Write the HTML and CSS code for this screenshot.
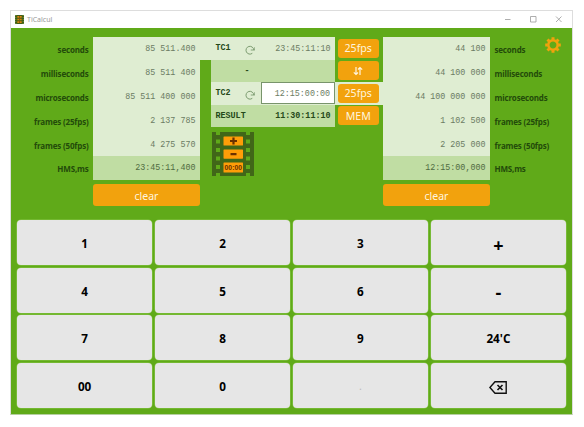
FILE: index.html
```html
<!DOCTYPE html>
<html lang="en">
<head>
<meta charset="utf-8">
<title>TiCalcul</title>
<link rel="stylesheet" href="styles.css">
</head>
<body>
<div class="window">
  <header class="titlebar">
    <svg class="app-icon" viewBox="0 0 9 9"><rect width="9" height="9" fill="#405f18"/><path d="M.8 0v9M8.2 0v9" stroke="#78963c" stroke-dasharray="1 1"/><path d="M2.3 1.8h4.4M2.3 4.5h4.4M2.3 7.2h4.4" stroke="#d8830b" stroke-width="1.7"/><path d="M4.5 1v7" stroke="#83500d" stroke-width=".8"/></svg>
    <span class="title">TiCalcul</span>
    <svg class="controls" viewBox="0 0 60 10" fill="none" stroke="#999" stroke-width=".8"><path d="M0 4.500h5.500M25.500 1.500h5.500v5.500h-5.500zM51 1.500l5.500 5.500M56.500 1.500l-5.500 5.500"/></svg>
  </header>
  <main class="app">
    <section class="converter">
      <div class="labels left">
        <span>seconds</span><span>milliseconds</span><span>microseconds</span><span>frames (25fps)</span><span>frames (50fps)</span><span>HMS,ms</span>
      </div>
      <div class="column">
        <div class="values">
          <span>85 511.400</span><span>85 511 400</span><span>85 511 400 000</span><span>2 137 785</span><span>4 275 570</span><span class="hms">23:45:11,400</span>
        </div>
        <button class="orange clear">clear</button>
      </div>
      <div class="middle">
        <div class="tc first">
          <b>TC1</b>
          <svg class="reload" viewBox="0 0 10 10"><path d="M7.300 8.300A3.900 3.900 0 1 1 8.800 5" fill="none" stroke="#7c9b70" stroke-width="1"/><path d="M5.800 5h4V2.200" fill="none" stroke="#7c9b70" stroke-width=".9"/></svg>
          <span class="time">23:45:11:10</span>
          <button class="orange">25fps</button>
        </div>
        <div class="tc operation">
          <b class="sign">-</b>
          <button class="orange"><svg class="swap" viewBox="0 0 10 10" fill="none" stroke="#fff5df" stroke-width="1.200"><path d="M3 1v7.500M.8 6.300L3 8.500l2-2M7 9V1.500M5 3.500l2-2 2.200 2.200"/></svg></button>
        </div>
        <div class="tc second">
          <b>TC2</b>
          <svg class="reload" viewBox="0 0 10 10"><path d="M7.300 8.300A3.900 3.900 0 1 1 8.800 5" fill="none" stroke="#7c9b70" stroke-width="1"/><path d="M5.800 5h4V2.200" fill="none" stroke="#7c9b70" stroke-width=".9"/></svg>
          <span class="time active">12:15:00:00</span>
          <button class="orange">25fps</button>
        </div>
        <div class="tc result">
          <b>RESULT</b>
          <b class="time">11:30:11:10</b>
          <button class="orange">MEM</button>
        </div>
        <svg class="film" viewBox="0 0 42 44">
          <path fill="#416718" d="M0 0h4v3h4V0h26v3h4V0h4v44h-4v-3h-4v3H8v-3H4v3H0z"/>
          <path fill="#60aa19" d="M4 7.500h4v4H4zM4 16h4v4H4zM4 24.500h4v4H4zM4 33h4v4H4zM34 7.500h4v4h-4zM34 16h4v4h-4zM34 24.500h4v4h-4zM34 33h4v4h-4z"/>
          <g fill="#ff9d08"><rect x="11.500" y="4.500" width="19.500" height="9" rx=".6"/><rect x="11.500" y="17.500" width="19.500" height="9.200" rx=".6"/><rect x="11.500" y="30.500" width="19.500" height="10" rx=".6"/></g>
          <path d="M18 9h7M21.500 5.500v7M18.500 22.200h6" stroke="#6b3100" stroke-width="2.200"/>
          <text class="film-time" x="21.300" y="38.200" text-anchor="middle" textLength="17.500" lengthAdjust="spacingAndGlyphs">00:00</text>
        </svg>
      </div>
      <div class="column">
        <div class="values">
          <span>44 100</span><span>44 100 000</span><span>44 100 000 000</span><span>1 102 500</span><span>2 205 000</span><span class="hms">12:15:00,000</span>
        </div>
        <button class="orange clear">clear</button>
      </div>
      <div class="labels right">
        <span>seconds</span><span>milliseconds</span><span>microseconds</span><span>frames (25fps)</span><span>frames (50fps)</span><span>HMS,ms</span>
      </div>
      <svg class="gear" viewBox="-8 -8 16 16"><g fill="none" stroke="#f1a20d"><circle r="4.700" stroke-width="2.500"/><path stroke-width="3" d="M0-5.300v-2.500M0 5.300v2.500M-5.300 0h-2.500M5.300 0h2.500M3.750-3.750l1.750-1.750M-3.750-3.750l-1.750-1.750M3.750 3.750l1.750 1.750M-3.750 3.750l-1.750 1.750"/></g></svg>
    </section>
    <section class="keypad">
      <button>1</button><button>2</button><button>3</button><button class="operator">+</button>
      <button>4</button><button>5</button><button>6</button><button class="operator">-</button>
      <button>7</button><button>8</button><button>9</button><button>24'C</button>
      <button>00</button><button>0</button><button class="disabled">.</button>
      <button><svg class="backspace" viewBox="0 0 18 13" fill="none" stroke="#111" stroke-width="1.400"><path d="M6 .8h11.200v11.400H6L.9 6.500z"/><path d="M8.500 4l5 5M13.500 4l-5 5" stroke-width="1.600"/></svg></button>
    </section>
  </main>
</div>
</body>
</html>
```
FILE: styles.css
```css
* { box-sizing: border-box; }
body { margin: 0; padding: 10px 0 0 10px; background: #fff; font-family: "Noto Sans", sans-serif; }
button { border: 0; margin: 0; padding: 0; font-family: inherit; }
svg { display: block; flex: none; }
.window { width: 563px; height: 405px; border: 1px solid #ddd; border-bottom-color: #b5cfa0; background: #fff; }
.titlebar { display: flex; align-items: center; height: 17px; padding-left: 4px; }
.app-icon { width: 9px; height: 9px; }
.title { margin-left: 3px; font-size: 7px; line-height: 10px; color: #999; }
.controls { width: 60px; height: 10px; margin-left: auto; margin-right: 7px; }
.app { height: 386px; background: #60aa19; }
.converter { position: relative; display: flex; align-items: flex-start; height: 192px; padding-top: 9px; }
.labels { display: flex; flex-direction: column; font-family: "Open Sans", "Noto Sans", sans-serif; font-size: 8px; letter-spacing: -.17px; font-weight: 700; color: #234b0a; white-space: nowrap; }
.labels span { height: 23.900px; line-height: 25.500px; }
.left { width: 82px; padding-right: 4.500px; text-align: right; }
.right { padding-left: 4.500px; }
.column { width: 107px; }
.values { height: 143px; background: #dfedd2; font: 8.400px/25.500px "Liberation Mono", monospace; color: #6b7c63; }
.values span { display: block; height: 23.900px; padding-right: 4.500px; text-align: right; white-space: pre; }
.values .hms { height: 23.500px; background: #c0dda3; color: #4f6b40; }
.orange { display: flex; align-items: center; justify-content: center; background: #f2a20d; color: #fff5df; border-radius: 3px; }
.clear { width: 107px; height: 22px; margin-top: 4px; padding-top: 1px; font-size: 10.500px; line-height: 20px; }
.middle { width: 183px; padding-left: 11px; }
.tc { display: flex; align-items: center; width: 172px; height: 22.500px; font: 8.400px/22px "Liberation Mono", monospace; color: #244818; background: linear-gradient(to right, #c0dda3 124px, transparent 124px); }
.tc > b:first-child { width: 34px; padding-left: 4.500px; }
.tc .orange { width: 40.500px; height: 19px; margin-left: auto; margin-right: 4.500px; font: 10.600px/18px "Noto Sans", sans-serif; }
.tc .time { width: 74px; height: 22px; padding-right: 4.500px; line-height: 24px; text-align: right; }
.first { width: 183px; margin-left: -11px; padding-left: 11px; background: linear-gradient(to right, #dfedd2 135px, transparent 135px); }
.second { background: #dfedd2; }
.first .time, .second .time { color: #6b7c63; }
.second .active { background: #fff; border: 1px solid #78946b; line-height: 22px; padding-right: 4px; }
.reload { width: 10px; height: 10px; margin: 3px 6px 0 0; }
.tc > .sign:first-child { padding-left: 33.500px; width: 50px; }
.result .time { margin-left: 16px; line-height: 22px; }
.swap { width: 10px; height: 10px; }
.film { width: 42px; height: 44px; margin: 5px 0 0 1px; }
.film-time { font: bold 6.500px "Liberation Sans", sans-serif; fill: #6b3100; }
.gear { position: absolute; right: 11px; top: 8.500px; width: 16px; height: 16px; }
.keypad { display: grid; grid-template-columns: repeat(4, 1fr); grid-template-rows: repeat(4, 45px); gap: 2.700px; padding: 0 6px 0 6px; }
.keypad button { display: flex; align-items: center; justify-content: center; background: #e6e6e6; border-radius: 4px; box-shadow: 0 0 0 .6px #88c54b; font-family: "Open Sans", "Noto Sans", sans-serif; font-size: 11.700px; font-weight: 700; line-height: 16px; color: #000; padding-top: 1px; }
.keypad .operator { font-size: 18px; padding-top: 4px; }
.keypad .disabled { color: #bbb; font-weight: 400; font-size: 11px; }
.backspace { width: 18px; height: 13px; margin-top: 2px; }
```
